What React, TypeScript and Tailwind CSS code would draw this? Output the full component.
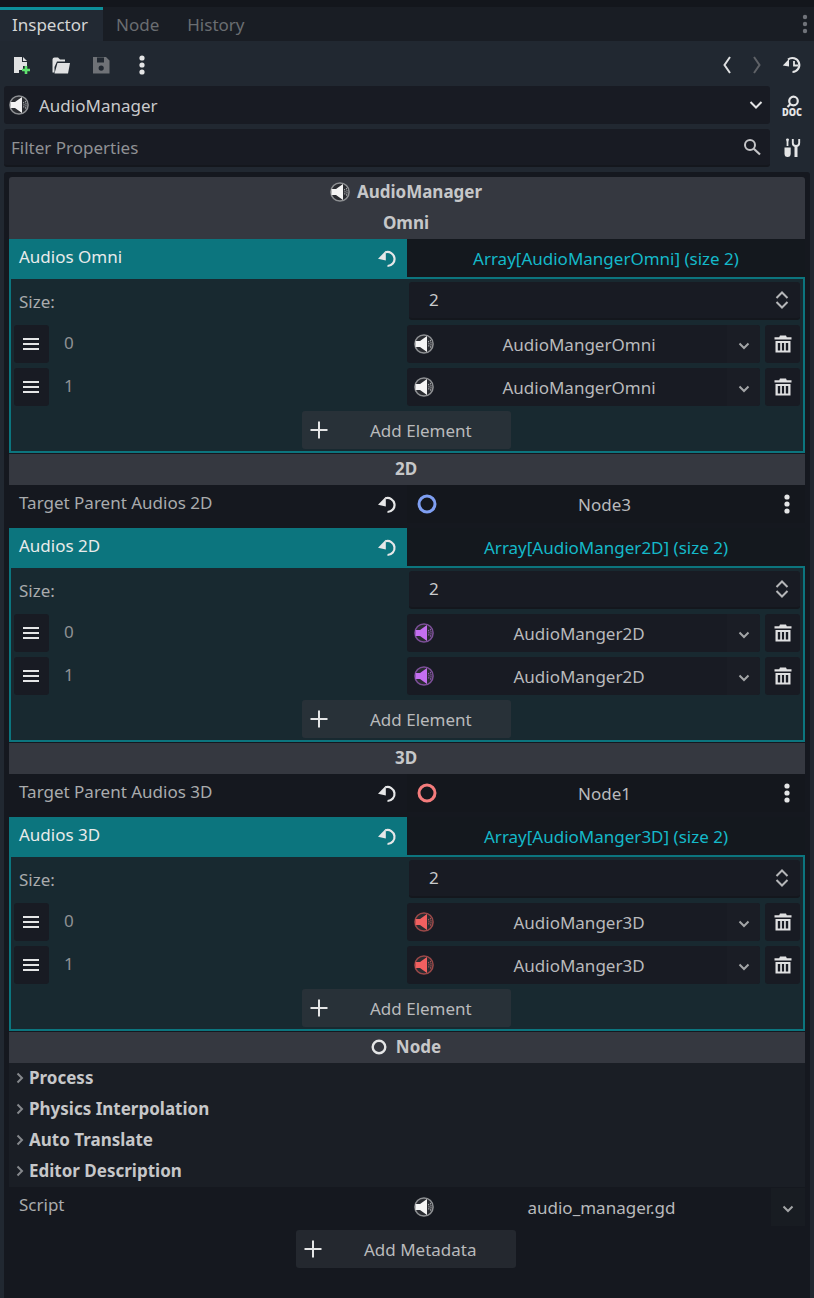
import React from "react";

const Speaker = ({ ring = "#8e9093", fill = "#f4f4f4", wave = "#a5a7aa" }: { ring?: string; fill?: string; wave?: string }) => (
  <svg width="20" height="20" viewBox="0 0 20 20" className="shrink-0">
    <circle cx="10" cy="10" r="9.1" fill="#2a2c31" stroke={ring} strokeWidth="1.5" />
    <path d="M1.5 7H6L13 2V18L6 13H1.5Z" fill={fill} />
    <path d="M14.4 7Q15.6 10 14.4 13M16.3 6Q17.8 10 16.3 14" fill="none" stroke={wave} strokeWidth="1.1" strokeDasharray="1.4 0.7" />
  </svg>
);

const Reset = () => (
  <svg width="20" height="18" viewBox="0 0 20 18" className="shrink-0">
    <path d="M8.5 2.3A7 7 0 1 1 10.5 16" fill="none" stroke="#e6e7e8" strokeWidth="2.2" />
    <path d="M1 8.8L8.8 0.8V10.6Z" fill="#e6e7e8" />
  </svg>
);

const Chevron = ({ big }: { big?: boolean }) =>
  big ? (
    <svg width="14" height="10" viewBox="0 0 14 10">
      <path d="M1.5 2L7 7.5L12.5 2" fill="none" stroke="#e2e3e4" strokeWidth="2" />
    </svg>
  ) : (
    <svg width="14" height="10" viewBox="0 0 14 10" className="mt-[3px]">
      <path d="M2.5 2.5L7 7L11.5 2.5" fill="none" stroke="#a3a5a7" strokeWidth="2" />
    </svg>
  );

const Trash = () => (
  <svg width="18" height="18" viewBox="0 0 18 18">
    <path d="M6 0.5H12L12.8 2.2H17.5V4.4H0.5V2.2H5.2Z" fill="#dfe0e1" />
    <path fillRule="evenodd" d="M1.5 6H16.5V17.5H1.5ZM3.8 8V15.5H6.2V8ZM7.9 8V15.5H10.1V8ZM11.8 8V15.5H14.2V8Z" fill="#dfe0e1" />
  </svg>
);

const Hamburger = () => (
  <svg width="16" height="12" viewBox="0 0 16 12" className="mr-[2px]">
    <path d="M0 1H16M0 6H16M0 11H16" stroke="#e4e5e6" strokeWidth="2" />
  </svg>
);

const Plus = () => (
  <svg width="18" height="18" viewBox="0 0 18 18" className="shrink-0">
    <path d="M9 0.5V17.5M0.5 9H17.5" stroke="#e4e5e6" strokeWidth="2" />
  </svg>
);

const Ring = ({ color, size = 20, w = 3 }: { color: string; size?: number; w?: number }) => (
  <svg width={size} height={size} viewBox={`0 0 ${size} ${size}`} className="shrink-0">
    <circle cx={size / 2} cy={size / 2} r={size / 2 - w / 2 - 0.5} fill="none" stroke={color} strokeWidth={w} />
  </svg>
);

const Kebab = ({ color = "#e4e5e6", r = 2.6 }: { color?: string; r?: number }) => (
  <svg width="6" height="20" viewBox="0 0 6 20">
    <circle cx="3" cy="3" r={r} fill={color} />
    <circle cx="3" cy="10" r={r} fill={color} />
    <circle cx="3" cy="17" r={r} fill={color} />
  </svg>
);

const Section = ({ children }: { children: React.ReactNode }) => (
  <div className="mt-px flex h-[31px] items-center justify-center gap-[9px] bg-[#353840] pr-[2px] pb-[2px] font-bold text-[#c6c7c9] leading-[22px]">
    {children}
  </div>
);

const ArrayProp = ({
  label,
  value,
  item,
  icon,
}: {
  label: string;
  value: string;
  item: string;
  icon: React.ReactNode;
}) => (
  <div>
    <div className="flex h-[38px]">
      <div className="flex h-full w-[398px] items-center justify-between bg-[#0c757e] pr-[10px] pl-[10px] text-[#e8ebeb]">
        <span className="-mt-[2px]">{label}</span>
        <div className="mt-px">
          <Reset />
        </div>
      </div>
      <div className="flex h-full flex-1 items-center justify-center bg-[#14181e] pt-[2px] text-[#14b9c9]">{value}</div>
    </div>
    <div className="h-[176px] border-2 border-[#0c757e] bg-[#182930] pt-[3px]">
      <div className="flex h-[38px]">
        <div className="w-[398px] pt-[9px] pl-[8px] text-[#a9abad]">Size:</div>
        <div className="flex w-[391px] items-center justify-between rounded-[3px] border-b-2 border-[#14171d] bg-[#181b23] pr-[10px] pl-[20px] text-[#c9cacc]">
          <span>2</span>
          <svg width="16" height="20" viewBox="0 0 16 20">
            <path d="M2.5 8L8 2.5L13.5 8M2.5 12L8 17.5L13.5 12" fill="none" stroke="#b5b6b8" strokeWidth="2" />
          </svg>
        </div>
      </div>
      {[0, 1].map((n) => (
        <div key={n} className="mt-[5px] ml-[3px] flex h-[38px]">
          <div className="flex w-[35px] items-center justify-center rounded-[3px] bg-[#181b23]">
            <Hamburger />
          </div>
          <div className="w-[358px] pt-[7px] pl-[15px] text-[#8f9194]">{n}</div>
          <div className="flex w-[353px] items-center rounded-[3px] bg-[#181b23]">
            <div className="flex h-full w-[24px] items-center justify-end">
              <div className="-mr-[3px]">{icon}</div>
            </div>
            <div className="flex-1 pt-[2px] text-center text-[#b9babc]">{item}</div>
            <div className="flex h-full w-[33px] items-center justify-center rounded-r-[3px] bg-[#1a1d25]">
              <Chevron />
            </div>
          </div>
          <div className="ml-[5px] flex w-[35px] items-center justify-center rounded-[3px] bg-[#181b23]">
            <Trash />
          </div>
        </div>
      ))}
      <div className="mt-[5px] ml-[291px] flex h-[38px] w-[209px] items-center rounded-[3px] bg-[#283138] pl-[8px] text-[#b9babc]">
        <Plus />
        <span className="ml-[42px] pt-px">Add Element</span>
      </div>
    </div>
  </div>
);

const NodeProp = ({ label, ring, node }: { label: string; ring: string; node: string }) => (
  <div className="flex h-[38px]">
    <div className="flex h-[36px] w-[398px] items-center justify-between pr-[10px] pl-[10px] text-[#a9abad]">
      <span>{label}</span>
      <div className="mt-[3px]">
        <Reset />
      </div>
    </div>
    <div className="flex flex-1 items-center bg-[#14171d]">
      <div className="ml-[10px]">
        <Ring color={ring} />
      </div>
      <div className="flex-1 pt-[2px] pr-[12px] text-center text-[#b9babc]">{node}</div>
      <div className="mr-[15px]">
        <Kebab />
      </div>
    </div>
  </div>
);

export default function App() {
  return (
    <div className="h-[1298px] w-[814px] overflow-hidden bg-[#212831] font-['Noto_Sans',sans-serif] text-[17px] leading-[22px]">
      <div className="h-[7px] bg-[#13161c]" />
      <div className="flex h-[34px] bg-[#191d24]">
        <div className="w-[103px] border-t-[3px] border-[#0d8f99] bg-[#222933] pt-[4px] pl-[12px] text-[#d4d5d6]">Inspector</div>
        <div className="pt-[7px] pl-[13px] text-[#6a6d71]">Node</div>
        <div className="pt-[7px] pl-[28px] text-[#6a6d71]">History</div>
        <div className="mt-[7px] mr-[6px] ml-auto">
          <Kebab color="#70737a" r={2.2} />
        </div>
      </div>

      <div className="flex h-[44px] items-center pt-[4px]">
        <svg width="20" height="20" viewBox="0 0 20 20" className="ml-[12px]">
          <path d="M2 2H10V7H15V11H11V15H7V18H2Z" fill="#e0e1e2" />
          <path d="M11 2L15 6H11Z" fill="#e0e1e2" />
          <path d="M14 11V19M10 15H18" stroke="#5fe36f" strokeWidth="2.6" />
        </svg>
        <svg width="20" height="20" viewBox="0 0 20 20" className="ml-[19px]">
          <path d="M1.5 17.5V4.5Q1.5 2.5 3.5 2.5H7L9 4.5H14V6.5H6L3.5 12V17.5Z" fill="#e0e1e2" />
          <path d="M6.5 8H19L17 18.5H3.5Z" fill="#e0e1e2" />
        </svg>
        <svg width="20" height="20" viewBox="0 0 20 20" className="ml-[20px]">
          <path fillRule="evenodd" d="M2 2H15L18.5 5.5V18.5H2ZM6 2.5V7.5H13V2.5ZM10.2 10.5A2.6 2.6 0 1 0 10.2 15.7A2.6 2.6 0 1 0 10.2 10.5Z" fill="#6f7277" />
        </svg>
        <div className="ml-[28px]">
          <Kebab />
        </div>
        <svg width="10" height="18" viewBox="0 0 10 18" className="ml-auto">
          <path d="M8 1L2.5 9L8 17" fill="none" stroke="#dfe0e1" strokeWidth="2" />
        </svg>
        <svg width="10" height="18" viewBox="0 0 10 18" className="ml-[20px]">
          <path d="M2 1L7.5 9L2 17" fill="none" stroke="#5f6267" strokeWidth="2" />
        </svg>
        <svg width="20" height="18" viewBox="0 0 20 18" className="mr-[12px] ml-[20px]">
          <path d="M6 3.5A7 7 0 1 1 10.5 16" fill="none" stroke="#e4e5e6" strokeWidth="2.1" />
          <path d="M0.8 9.5L7 3V10.5Z" fill="#e4e5e6" />
          <path d="M12 5V9.5H16" fill="none" stroke="#e4e5e6" strokeWidth="1.8" />
        </svg>
      </div>

      <div className="mt-px flex h-[38px]">
        <div className="ml-[4px] flex w-[766px] items-center rounded-[3px] bg-[#181b23] pr-[7px] pl-[5px] text-[#c9cacc]">
          <Speaker />
          <span className="ml-[10px] pt-px">AudioManager</span>
          <div className="ml-auto">
            <Chevron big />
          </div>
        </div>
        <svg width="22" height="28" viewBox="0 0 22 28" className="mt-[8px] ml-[11px]">
          <circle cx="12.5" cy="7" r="4.3" fill="none" stroke="#e4e5e6" strokeWidth="2.2" />
          <path d="M9.5 10L6.5 13" stroke="#e4e5e6" strokeWidth="2.2" />
          <text x="11" y="21.5" textAnchor="middle" fontFamily="'Noto Sans',sans-serif" fontWeight="900" fontSize="10" textLength="20" lengthAdjust="spacingAndGlyphs" fill="#e4e5e6">
            DOC
          </text>
        </svg>
      </div>

      <div className="mt-[5px] flex h-[38px]">
        <div className="ml-[4px] flex w-[766px] items-center rounded-[3px] border-b-2 border-[#14171d] bg-[#181b23] pr-[8px] pl-[7px] text-[#8f9194]">
          <span className="pt-px">Filter Properties</span>
          <svg width="18" height="18" viewBox="0 0 18 18" className="mr-[1px] ml-auto">
            <circle cx="7" cy="7" r="5" fill="none" stroke="#c4c5c7" strokeWidth="2" />
            <path d="M10.8 10.8L17 16.5" stroke="#c4c5c7" strokeWidth="2.2" />
          </svg>
        </div>
        <svg width="18" height="20" viewBox="0 0 18 20" className="mt-[9px] ml-[13px]">
          <path d="M4.5 0.5V8" stroke="#e4e5e6" strokeWidth="1.8" />
          <path d="M3 1H6L5.2 3.5H3.8Z" fill="#e4e5e6" />
          <path d="M1.5 9.5H7.7V15.5Q7.7 19 4.6 19Q1.5 19 1.5 15.5Z" fill="#e4e5e6" />
          <path d="M13 7V19" stroke="#e4e5e6" strokeWidth="3" />
          <path d="M9.8 1V5Q9.8 8 13 8Q16.2 8 16.2 5V1" fill="none" stroke="#e4e5e6" strokeWidth="1.9" />
        </svg>
      </div>

      <div className="mt-[5px] ml-[4px] h-[1126px] w-[806px] rounded-t-[3px] bg-[#15181f] p-[5px]">
        <div className="flex h-[31px] items-center justify-center gap-[7px] rounded-t-[3px] bg-[#353840] pr-[2px] pb-[2px] font-bold text-[#c6c7c9]">
          <Speaker />
          <span>AudioManager</span>
        </div>
        <div className="flex h-[31px] items-center justify-center bg-[#353840] pr-[2px] pb-[2px] font-bold text-[#c6c7c9]">Omni</div>
        <ArrayProp label="Audios Omni" value="Array[AudioMangerOmni] (size 2)" item="AudioMangerOmni" icon={<Speaker />} />

        <Section>2D</Section>
        <NodeProp label="Target Parent Audios 2D" ring="#7f9ff2" node="Node3" />
        <div className="h-[5px]" />
        <ArrayProp
          label="Audios 2D"
          value="Array[AudioManger2D] (size 2)"
          item="AudioManger2D"
          icon={<Speaker ring="#7c4f98" fill="#c46ff0" wave="#8f5bb0" />}
        />

        <Section>3D</Section>
        <NodeProp label="Target Parent Audios 3D" ring="#f47c7c" node="Node1" />
        <div className="h-[5px]" />
        <ArrayProp
          label="Audios 3D"
          value="Array[AudioManger3D] (size 2)"
          item="AudioManger3D"
          icon={<Speaker ring="#9a4848" fill="#f26060" wave="#a85656" />}
        />

        <Section>
          <Ring color="#e4e5e6" size={16} w={2.4} />
          <span>Node</span>
        </Section>

        <div className="h-[124px] bg-[#1a1e25]">
          {["Process", "Physics Interpolation", "Auto Translate", "Editor Description"].map((s) => (
            <div key={s} className="flex h-[31px] items-center pb-[2px] font-bold text-[#c6c7c9]">
              <svg width="8" height="12" viewBox="0 0 8 12" className="ml-[7px]">
                <path d="M1.5 1.5L6 6L1.5 10.5" fill="none" stroke="#85888c" strokeWidth="2" />
              </svg>
              <span className="ml-[5px]">{s}</span>
            </div>
          ))}
        </div>

        <div className="flex h-[39px]">
          <div className="w-[398px] pt-[7px] pl-[10px] text-[#a9abad]">Script</div>
          <div className="mt-px flex flex-1 items-center bg-[#15181f]">
            <div className="ml-[7px]">
              <Speaker />
            </div>
            <div className="flex-1 pt-px pr-[2px] text-center text-[#b9babc]">audio_manager.gd</div>
            <div className="flex h-full w-[34px] items-center justify-center bg-[#181c22]">
              <Chevron />
            </div>
          </div>
        </div>
        <div className="mt-[4px] ml-[287px] flex h-[38px] w-[220px] items-center rounded-[3px] bg-[#24282f] pl-[8px] text-[#b9babc]">
          <Plus />
          <span className="ml-[42px] pt-px">Add Metadata</span>
        </div>
      </div>
    </div>
  );
}
